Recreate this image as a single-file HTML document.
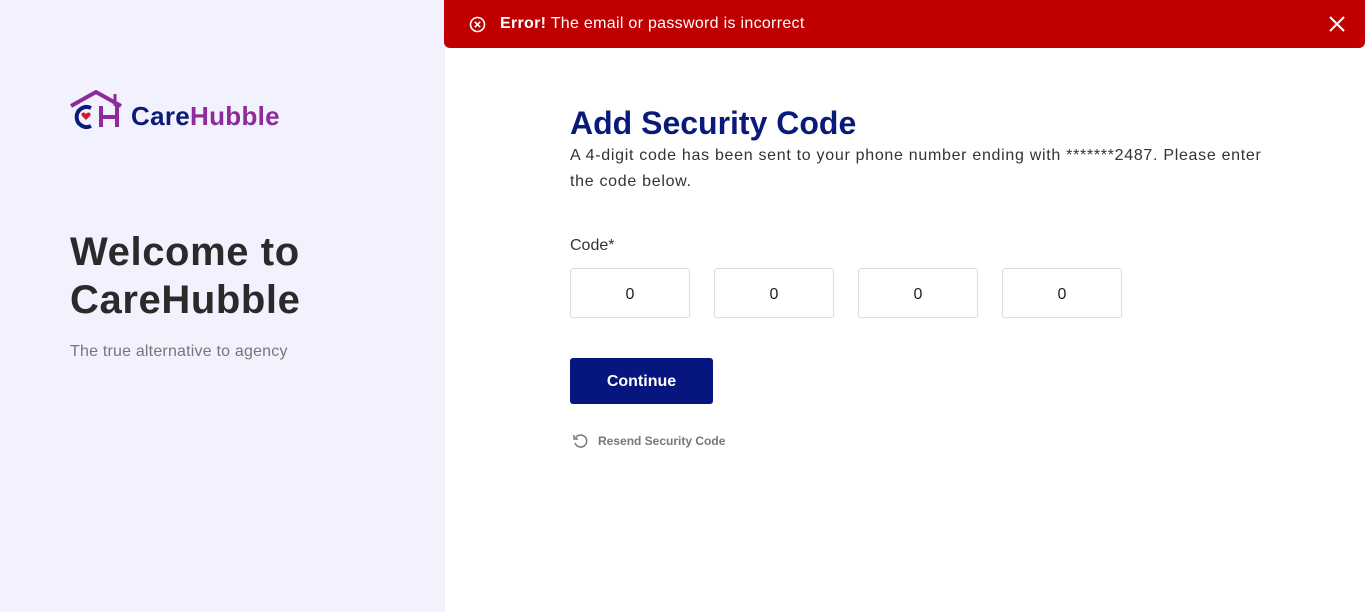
<!DOCTYPE html>
<html><head><meta charset="utf-8"><style>
*{margin:0;padding:0;box-sizing:border-box}
body{width:1366px;height:612px;overflow:hidden;font-family:"Liberation Sans","DejaVu Sans",sans-serif;background:#fff;position:relative}
.left{position:absolute;left:0;top:0;width:445px;height:612px;background:#f1f2fd}
.logo{position:absolute;left:70px;top:90px}
.logo .t{position:absolute;left:61px;top:11px;font-size:26px;font-weight:bold;white-space:nowrap;letter-spacing:0.3px}
h1{position:absolute;left:70px;top:228px;font-size:40px;line-height:48px;color:#2a2a2a;font-weight:bold;letter-spacing:0.6px}
.sub{position:absolute;left:70px;top:343px;font-size:16px;color:#777;letter-spacing:0.2px}
.err{position:absolute;left:444px;top:0;width:921px;height:48px;background:#c00000;border-radius:0 0 6px 6px;color:#fff;font-size:16px}
.err .m{position:absolute;left:56px;top:15px;letter-spacing:0.3px}
.err svg{position:absolute}
h2{position:absolute;left:570px;top:105px;font-size:32px;color:#0a1a7a;font-weight:bold}
.desc{position:absolute;left:570px;top:143px;width:760px;font-size:16px;line-height:26px;color:#333;letter-spacing:0.7px}
.lbl{position:absolute;left:570px;top:237px;font-size:16px;color:#333}
.box{position:absolute;top:268px;width:120px;height:50px;border:1px solid #ddd;border-radius:3px;text-align:center;line-height:52px;font-size:16px;color:#222}
.btn{position:absolute;left:570px;top:358px;width:143px;height:46px;background:#06167e;border-radius:3px;color:#fff;font-weight:bold;font-size:16px;text-align:center;line-height:48px}
.rs{position:absolute;left:598px;top:434px;font-size:12px;font-weight:bold;color:#777}
</style></head><body>
<div class="left">
<div class="logo">
<svg width="56" height="40" viewBox="0 0 56 40">
<path d="M1 16 L26 2 L51 16" fill="none" stroke="#8e2a9b" stroke-width="4"/>
<path d="M45 4 V16" stroke="#8e2a9b" stroke-width="3"/>
<path d="M21 18 A10 10 0 1 0 21 36" fill="none" stroke="#0c1a7a" stroke-width="4"/>
<path d="M16 24 c-2-3-6-1-4 2 l4 4 l4-4 c2-3-2-5-4-2z" fill="#d7182a"/>
<path d="M31 16 V37 M47 16 V37 M31 27 H47" stroke="#8e2a9b" stroke-width="4" fill="none"/>
</svg>
<div class="t"><span style="color:#0c1a7a">Care</span><span style="color:#8e2a9b">Hubble</span></div>
</div>
<h1>Welcome to<br>CareHubble</h1>
<div class="sub">The true alternative to agency</div>
</div>
<div class="err">
<svg style="left:25px;top:16px" width="17" height="17" viewBox="0 0 17 17"><circle cx="8.5" cy="8.5" r="7" fill="none" stroke="#fff" stroke-width="1.6"/><path d="M5.8 5.8 L11.2 11.2 M11.2 5.8 L5.8 11.2" stroke="#fff" stroke-width="1.6"/></svg>
<div class="m"><b>Error!</b> The email or password is incorrect</div>
<svg style="left:885px;top:16px" width="16" height="16" viewBox="0 0 16 16"><path d="M1 1 L15 15 M15 1 L1 15" stroke="#fff" stroke-width="2"/></svg>
</div>
<h2>Add Security Code</h2>
<div class="desc">A 4-digit code has been sent to your phone number ending with *******2487. Please enter<br>the code below.</div>
<div class="lbl">Code*</div>
<div class="box" style="left:570px">0</div>
<div class="box" style="left:714px">0</div>
<div class="box" style="left:858px">0</div>
<div class="box" style="left:1002px">0</div>
<div class="btn">Continue</div>
<svg style="position:absolute;left:572px;top:433px" width="16" height="16" viewBox="0 0 16 16"><path d="M3.5 5 A6 6 0 1 1 3 10" fill="none" stroke="#777" stroke-width="1.5"/><path d="M2 2 V6 H6" fill="none" stroke="#777" stroke-width="1.5"/></svg>
<div class="rs">Resend Security Code</div>
</body></html>
